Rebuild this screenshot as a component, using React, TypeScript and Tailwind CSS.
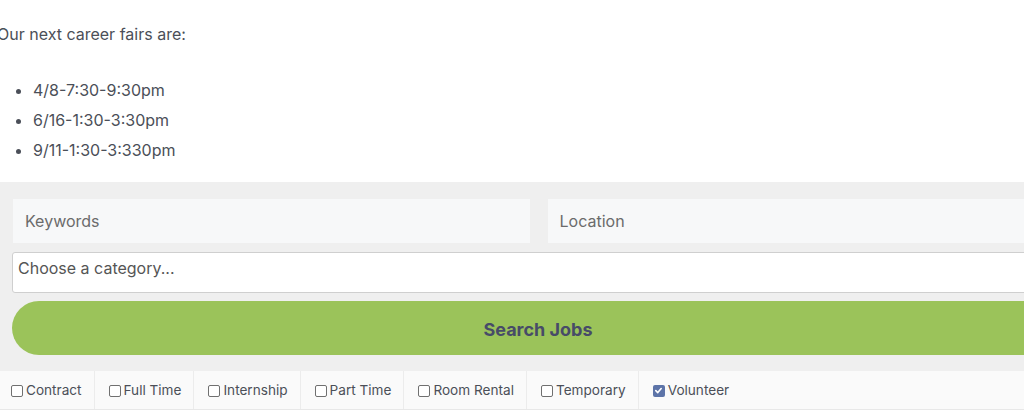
import React from "react";

const types = [
  { label: "Contract", checked: false },
  { label: "Full Time", checked: false },
  { label: "Internship", checked: false },
  { label: "Part Time", checked: false },
  { label: "Room Rental", checked: false },
  { label: "Temporary", checked: false },
  { label: "Volunteer", checked: true },
];

function Box({ checked }: { checked: boolean }) {
  if (checked) {
    return (
      <span className="inline-flex h-[12px] w-[12px] items-center justify-center rounded-[2px] bg-[#5d74a8]">
        <svg width="9" height="9" viewBox="0 0 10 10">
          <path d="M2 5.2 L4.2 7.3 L8 2.8" fill="none" stroke="white" strokeWidth="1.8" strokeLinecap="round" strokeLinejoin="round" />
        </svg>
      </span>
    );
  }
  return <span className="inline-block h-[12px] w-[12px] rounded-[2px] border border-[#707070] bg-white" />;
}

export default function App() {
  return (
    <div className="w-[1024px] h-[420px] overflow-hidden bg-white" style={{ fontFamily: "Inter, 'Noto Sans', sans-serif" }}>
      <div className="ml-[-3px] w-[1083px]">
        <p className="pt-[19px] text-[16px] leading-[30px] text-[#4b4f58]">Our next career fairs are:</p>
        <ul className="mt-[26px] mb-[17px] list-disc pl-[36px] text-[16px] leading-[30px] text-[#4b4f58]">
          <li>4/8-7:30-9:30pm</li>
          <li>6/16-1:30-3:30pm</li>
          <li>9/11-1:30-3:330pm</li>
        </ul>
        <div className="bg-[#efefef] pl-[16px] pr-[16px] pt-[17px] pb-[16px]">
          <div className="flex gap-[18px]">
            <div className="flex h-[44px] flex-1 items-center bg-[#f7f8f9] pl-[12px] text-[16px] text-[#6b6b6b]">Keywords</div>
            <div className="flex h-[44px] flex-1 items-center bg-[#f7f8f9] pl-[12px] text-[16px] text-[#6b6b6b]">Location</div>
          </div>
          <div className="mt-[9px] ml-[-1px] h-[41px] rounded-[3px] border border-[#cfcfcf] bg-white pl-[5px] pt-[4px] text-[16px] leading-[22px] text-[#555]">
            Choose a category...
          </div>
          <div className="mt-[8px] ml-[-1px] flex h-[54px] items-center justify-center rounded-full bg-[#9bc35a] pt-[3px] text-[18px] font-bold text-[#474b68]">
            Search Jobs
          </div>
        </div>
        <div className="flex h-[39px] border-b border-[#e8e8e8] bg-[#fafafa]">
          {types.map((t, i) => (
            <div
              key={t.label}
              className={
                "flex items-center gap-[3px] pl-[14px] pr-[12px] pt-[1px] text-[13.6px] text-[#4b4f58] " +
                (i < types.length - 1 ? "border-r border-[#ececec]" : "")
              }
            >
              <Box checked={t.checked} />
              <span>{t.label}</span>
            </div>
          ))}
        </div>
      </div>
    </div>
  );
}
